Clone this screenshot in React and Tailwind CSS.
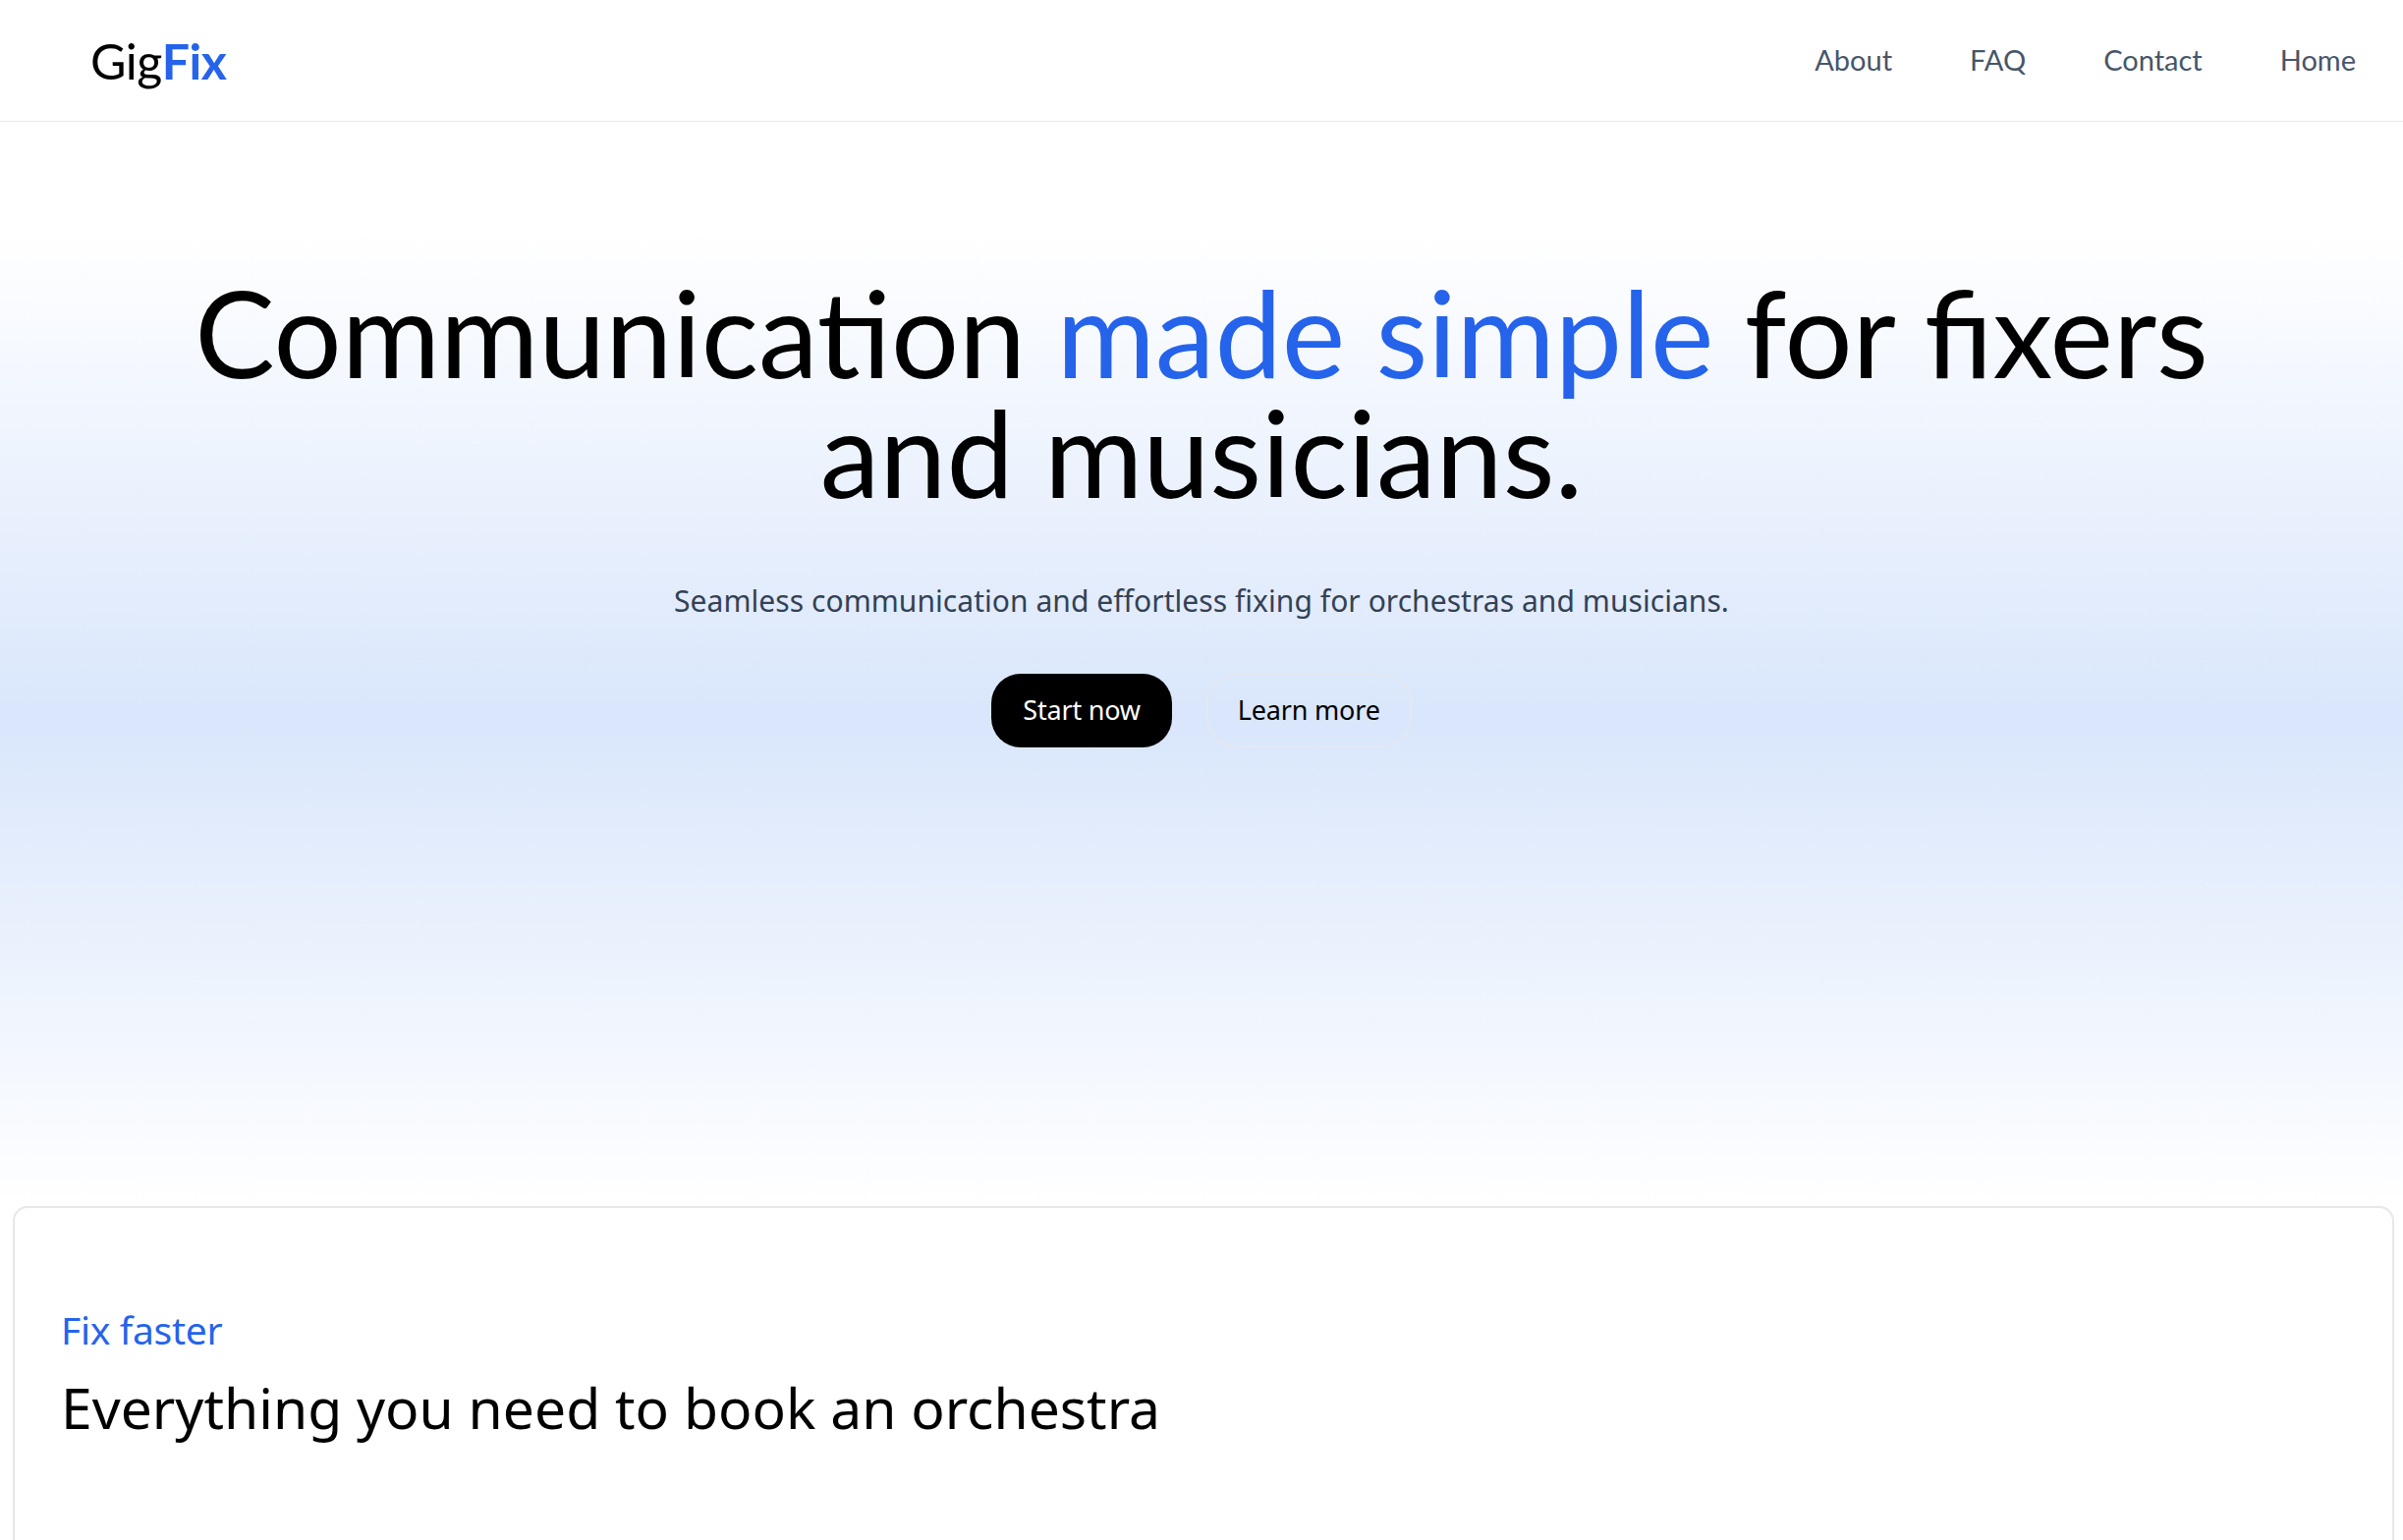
const NAV = ['About', 'FAQ', 'Contact', 'Home']

function Header() {
  return (
    <header className="flex h-[124px] items-center justify-between border-b border-gray-200 bg-white pl-[92px] pr-[48px] shadow-[0_1px_3px_rgba(0,0,0,0.06)]">
      <a className="text-[50px] leading-none tracking-[-0.5px] text-black" style={{ fontFamily: 'Lato, sans-serif' }}>
        Gig<span className="font-bold text-[#2563eb]">Fix</span>
      </a>
      <nav className="flex items-center gap-[79px] pb-[2px]">
        {NAV.map((n) => (
          <a key={n} className="text-[29px] text-[#475569]" style={{ fontFamily: 'Lato, sans-serif' }}>
            {n}
          </a>
        ))}
      </nav>
    </header>
  )
}

function Hero() {
  return (
    <section className="flex h-[1104px] flex-col items-center bg-linear-to-b from-white from-10% via-[#d9e6fb] via-55% to-white pt-[153px]">
      <h1 className="text-center text-[122px] leading-[122px] text-black" style={{ fontFamily: 'Lato, sans-serif' }}>
        Communication <span className="text-[#2563eb]">made simple</span> for fixers
        <br />
        and musicians.
      </h1>
      <p className="mt-[68px] text-[30px] tracking-[0.05px] text-[#334155]">
        Seamless communication and effortless fixing for orchestras and musicians.
      </p>
      <div className="mt-[52px] flex items-center gap-[35px]">
        <button className="h-[75px] rounded-[30px] bg-black px-[32px] text-[27px] tracking-[-0.2px] text-white">Start now</button>
        <button className="h-[75px] rounded-[30px] border-2 border-[#e3e8f1] px-[30px] text-[27px] tracking-[-0.2px] text-black">Learn more</button>
      </div>
    </section>
  )
}

export default function App() {
  return (
    <div className="min-h-screen bg-white" style={{ fontFamily: '"Noto Sans", Lato, sans-serif' }}>
      <Header />
      <Hero />
      <section className="ml-[13px] mr-[9px] h-[600px] rounded-[15px] border-2 border-gray-200 px-[47px] pt-[100px]">
        <p className="text-[39px] leading-tight tracking-[-0.3px] text-[#2563eb]">Fix faster</p>
        <h2 className="mt-[19px] text-[57px] leading-tight text-black">Everything you need to book an orchestra</h2>
      </section>
    </div>
  )
}
